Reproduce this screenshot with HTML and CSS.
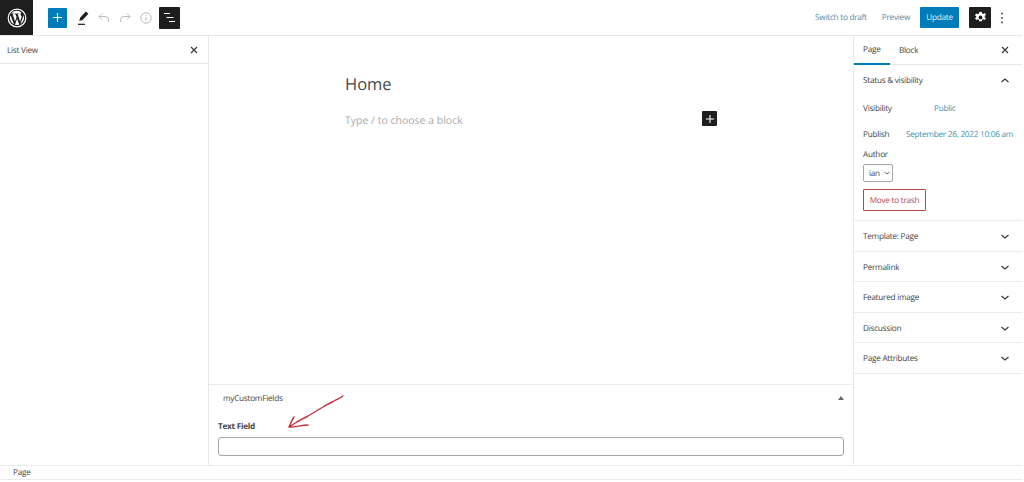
FILE: index.html
```html
<!DOCTYPE html>
<html lang="en">
<head>
    <meta charset="UTF-8">
    <title>Edit Page</title>
    <link rel="stylesheet" href="styles.css">
</head>
<body>
    <div class="editor">
        <!-- Top bar -->
        <header class="topbar">
            <div class="wp-logo">
                <svg width="20" height="20" viewBox="0 0 24 24"><circle cx="12" cy="12" r="10.6" fill="none" stroke="#fff" stroke-width="1.4"/><path fill="#fff" d="M3.6 12c0 3.3 1.9 6.2 4.7 7.6L4.3 8.6A8.4 8.4 0 0 0 3.6 12zm14.1-.4c0-1-.4-1.8-.7-2.3-.4-.7-.8-1.3-.8-2 0-.8.6-1.500 1.400-1.500h.1A8.4 8.4 0 0 0 5 6.800h.5c.9 0 2.200-.1 2.200-.1.4 0 .5.6 0 .7 0 0-.4 0-.9.1l2.900 8.700 1.800-5.300-1.300-3.400c-.4 0-.8-.1-.8-.1-.4 0-.4-.7.1-.7 0 0 1.300.1 2.100.1.900 0 2.200-.1 2.200-.1.4 0 .5.6 0 .7 0 0-.4 0-.9.1l2.900 8.600.8-2.700c.3-1.100.6-1.900.6-2.600zM12.100 12.800l-2.500 7.300a8.4 8.4 0 0 0 5.200-.1l-.1-.1-2.600-7.100zm7.200-4.700c0 .3.1.6.1.9 0 .9-.2 1.800-.7 3.100l-2.600 7.400a8.4 8.4 0 0 0 3.200-11.400z"/></svg>
            </div>
            <div class="tools">
                <button class="tool-add" type="button">
                    <svg width="9" height="9" viewBox="0 0 9 9"><path d="M4.500 0v9M0 4.500h9" stroke="#fff" stroke-width="1.100" fill="none"/></svg>
                </button>
                <svg class="tool-icon" width="16" height="16" viewBox="0 0 16 16"><path fill="#1e1e1e" d="M10.800 1.500l2.600 2.300-5.800 6.300-3.300 1 .8-3.300z"/><path stroke="#1e1e1e" stroke-width="1.200" d="M3 14.300h7"/></svg>
                <svg class="tool-icon" width="16" height="16" viewBox="0 0 16 16"><path fill="none" stroke="#bcbcbc" stroke-width="1" d="M6 3.500L3 6.500l3 3M3 6.500h6a3.500 3.500 0 0 1 3.500 3.500v2"/></svg>
                <svg class="tool-icon" width="16" height="16" viewBox="0 0 16 16"><path fill="none" stroke="#bcbcbc" stroke-width="1" d="M10 3.500l3 3-3 3M13 6.500H7A3.500 3.500 0 0 0 3.500 10v2"/></svg>
                <svg class="tool-icon" width="16" height="16" viewBox="0 0 16 16"><circle cx="8" cy="8" r="5.200" fill="none" stroke="#bcbcbc" stroke-width="1"/><path stroke="#bcbcbc" stroke-width="1.100" d="M8 7.200v3.300M8 5v1.100"/></svg>
                <button class="tool-list" type="button">
                    <svg width="13" height="11" viewBox="0 0 13 11"><path stroke="#fff" stroke-width="1.100" d="M1 1.500h6M3.500 5.500h7M6 9.500h6"/></svg>
                </button>
            </div>
            <div class="actions">
                <a class="link-btn">Switch to draft</a>
                <a class="link-btn preview">Preview</a>
                <button class="update-btn" type="button">Update</button>
                <button class="settings-btn" type="button">
                    <svg width="13" height="13" viewBox="0 0 24 24"><path fill="#fff" fill-rule="evenodd" d="M14.500 1.500l.6 3 2 .9 2.700-1.600 2.400 3.300-2.300 2.100v2.200l2.300 2.100-2.400 3.300-2.700-1.600-2 .9-.6 3h-5l-.6-3-2-.9-2.700 1.600-2.400-3.300 2.300-2.100V9.900L1.700 7.800l2.400-3.300 2.700 1.600 2-.9.6-3zM12 8.500a3.500 3.500 0 1 0 0 7 3.500 3.500 0 0 0 0-7z"/></svg>
                </button>
                <svg class="more" width="4" height="14" viewBox="0 0 4 14"><circle cx="2" cy="2.500" r=".9" fill="#444"/><circle cx="2" cy="7" r=".9" fill="#444"/><circle cx="2" cy="11.500" r=".9" fill="#444"/></svg>
            </div>
        </header>

        <div class="workspace">
            <!-- List view -->
            <aside class="listview">
                <div class="listview-head">
                    <span>List View</span>
                    <svg class="close" width="8" height="8" viewBox="0 0 8 8"><path d="M1 1l6 6M7 1L1 7" stroke="#333" stroke-width="1.100"/></svg>
                </div>
            </aside>

            <!-- Content -->
            <main class="content">
                <div class="canvas">
                    <div class="canvas-inner">
                        <h1 class="post-title">Home</h1>
                        <div class="block-row">
                            <span class="placeholder">Type / to choose a block</span>
                            <span class="block-add">
                                <svg width="8" height="8" viewBox="0 0 8 8"><path d="M4 0v8M0 4h8" stroke="#fff" stroke-width="1.100"/></svg>
                            </span>
                        </div>
                    </div>
                </div>
                <section class="metabox">
                    <div class="metabox-head">
                        <span>myCustomFields</span>
                        <span class="metabox-toggle"></span>
                    </div>
                    <label class="field-label">Text Field</label>
                    <input class="field-input" type="text">
                    <svg class="arrow" width="62" height="38" viewBox="0 0 62 38"><path fill="none" stroke="#c6303e" stroke-width="1.400" stroke-linecap="round" stroke-linejoin="round" d="M58 3c-3 2.500-6 3-10 5.500-4 2-7 3.500-10 5.500-5 3-10 6-15 9-4 2-8 4-12 6.500L4 34M4 34c1.500-3.500 3-7 5-10M4 34c6 .5 12-2 19-2"/></svg>
                </section>
            </main>

            <!-- Settings sidebar -->
            <aside class="sidebar">
                <div class="tabs">
                    <span class="tab active">Page</span>
                    <span class="tab">Block</span>
                    <svg class="close" width="8" height="8" viewBox="0 0 8 8"><path d="M1 1l6 6M7 1L1 7" stroke="#333" stroke-width="1.100"/></svg>
                </div>
                <section class="panel panel-open">
                    <div class="panel-title">
                        <span>Status &amp; visibility</span>
                        <svg class="chev" width="8" height="5" viewBox="0 0 8 5"><path d="M.5 4L4 1l3.500 3" fill="none" stroke="#333" stroke-width="1.100"/></svg>
                    </div>
                    <div class="row row-visibility">
                        <span class="row-label">Visibility</span>
                        <a class="row-value">Public</a>
                    </div>
                    <div class="row row-publish">
                        <span class="row-label">Publish</span>
                        <a class="row-value">September 26, 2022 10:06 am</a>
                    </div>
                    <div class="author-label">Author</div>
                    <div class="author-select">ian
                        <svg width="6" height="4" viewBox="0 0 6 4"><path d="M.5 1L3 3l2.500-2" fill="none" stroke="#555" stroke-width=".9"/></svg>
                    </div>
                    <button class="trash-btn" type="button">Move to trash</button>
                </section>
                <section class="panel">
                    <div class="panel-title"><span>Template: Page</span><svg class="chev" width="8" height="5" viewBox="0 0 8 5"><path d="M.5 1L4 4l3.500-3" fill="none" stroke="#333" stroke-width="1.100"/></svg></div>
                </section>
                <section class="panel">
                    <div class="panel-title"><span>Permalink</span><svg class="chev" width="8" height="5" viewBox="0 0 8 5"><path d="M.5 1L4 4l3.500-3" fill="none" stroke="#333" stroke-width="1.100"/></svg></div>
                </section>
                <section class="panel">
                    <div class="panel-title"><span>Featured image</span><svg class="chev" width="8" height="5" viewBox="0 0 8 5"><path d="M.5 1L4 4l3.500-3" fill="none" stroke="#333" stroke-width="1.100"/></svg></div>
                </section>
                <section class="panel">
                    <div class="panel-title"><span>Discussion</span><svg class="chev" width="8" height="5" viewBox="0 0 8 5"><path d="M.5 1L4 4l3.500-3" fill="none" stroke="#333" stroke-width="1.100"/></svg></div>
                </section>
                <section class="panel">
                    <div class="panel-title"><span>Page Attributes</span><svg class="chev" width="8" height="5" viewBox="0 0 8 5"><path d="M.5 1L4 4l3.500-3" fill="none" stroke="#333" stroke-width="1.100"/></svg></div>
                </section>
            </aside>
        </div>

        <footer class="statusbar">Page</footer>
    </div>
</body>
</html>
```

FILE: styles.css
```css
* {
    box-sizing: border-box;
}

body {
    margin: 0;
    background-color: #fff;
    color: #454545;
    font-family: "Open Sans", "Noto Sans", sans-serif;
    font-size: 8.2px;
    letter-spacing: -0.25px;
    line-height: 13px;
    text-rendering: geometricPrecision;
    overflow: hidden;
}

svg {
    display: block;
}

button {
    border: none;
    padding: 0;
    font-family: inherit;
    letter-spacing: inherit;
    text-rendering: inherit;
}

.editor {
    display: flex;
    flex-direction: column;
    width: 1022px;
    height: 480px;
}

/* Top bar */
.topbar {
    display: flex;
    align-items: center;
    height: 36px;
    flex-shrink: 0;
    border-bottom: 1px solid #e8e8e8;
}

.wp-logo {
    display: flex;
    align-items: center;
    justify-content: center;
    width: 33px;
    height: 35px;
    background-color: #1e1e1e;
}

.tools {
    display: flex;
    align-items: center;
    margin-left: 15px;
}

.tool-add {
    display: flex;
    align-items: center;
    justify-content: center;
    width: 19px;
    height: 20px;
    margin-right: 8px;
    border-radius: 1px;
    background-color: #007cba;
}

.tool-icon {
    margin-right: 5px;
}

.tool-list {
    display: flex;
    align-items: center;
    justify-content: center;
    width: 21px;
    height: 22px;
    border-radius: 1px;
    background-color: #1e1e1e;
}

.actions {
    display: flex;
    align-items: center;
    margin-left: auto;
    padding-right: 18px;
}

.link-btn {
    color: #4f8dab;
}

.preview {
    margin-left: 15px;
}

.update-btn {
    width: 39px;
    height: 21px;
    margin-left: 10px;
    border-radius: 1px;
    background-color: #007cba;
    color: #e6f2f8;
    font-size: 8.2px;
}

.settings-btn {
    display: flex;
    align-items: center;
    justify-content: center;
    width: 22px;
    height: 21px;
    margin-left: 10px;
    border-radius: 1px;
    background-color: #1e1e1e;
}

.more {
    margin-left: 9px;
}

/* Main area */
.workspace {
    display: flex;
    flex: 1;
    min-height: 0;
}

.listview {
    width: 209px;
    flex-shrink: 0;
    border-right: 1px solid #e8e8e8;
}

.listview-head {
    display: flex;
    align-items: center;
    justify-content: space-between;
    height: 28px;
    padding: 1px 10px 0 7px;
    border-bottom: 1px solid #e8e8e8;
}

.content {
    display: flex;
    flex-direction: column;
    flex: 1;
    min-width: 0;
}

.canvas {
    flex: 1;
    padding-top: 36px;
}

.canvas-inner {
    width: 372px;
    margin-left: 136px;
}

.post-title {
    margin: 0;
    color: #484848;
    font-size: 16.5px;
    font-weight: 400;
    letter-spacing: 0;
    line-height: 24px;
}

.block-row {
    display: flex;
    align-items: flex-start;
    justify-content: space-between;
    margin-top: 15px;
}

.placeholder {
    padding-top: 1px;
    color: #a8a8a8;
    font-size: 10.5px;
    letter-spacing: 0;
    line-height: 18px;
}

.block-add {
    display: flex;
    align-items: center;
    justify-content: center;
    width: 15px;
    height: 15px;
    border-radius: 1px;
    background-color: #1e1e1e;
}

.metabox {
    position: relative;
    height: 81px;
    padding: 0 9px;
    border-top: 1px solid #ececec;
}

.metabox-head {
    display: flex;
    align-items: center;
    justify-content: space-between;
    height: 25px;
    padding: 1px 0 0 5px;
}

.metabox-toggle {
    width: 0;
    height: 0;
    border-left: 3px solid transparent;
    border-right: 3px solid transparent;
    border-bottom: 4px solid #666;
}

.field-label {
    display: block;
    margin-top: 10px;
    color: #444;
    font-weight: 700;
    line-height: 13px;
}

.field-input {
    display: block;
    width: 626px;
    height: 19px;
    margin-top: 4px;
    border: 1px solid #a6a6a6;
    border-radius: 3px;
    background-color: #fff;
}

.arrow {
    position: absolute;
    left: 76px;
    top: 8px;
}

/* Settings sidebar */
.sidebar {
    width: 169px;
    flex-shrink: 0;
    border-left: 1px solid #e8e8e8;
}

.tabs {
    display: flex;
    align-items: center;
    height: 29px;
    padding-right: 13px;
    border-bottom: 1px solid #e8e8e8;
}

.tab {
    display: flex;
    align-items: center;
    height: 29px;
    padding: 1px 9px 0;
    color: #444;
}

.tab.active {
    width: 36px;
    border-bottom: 2px solid #007cba;
}

.tabs .close {
    margin-left: auto;
}

.panel {
    height: 30.5px;
    border-bottom: 1px solid #ececec;
}

.panel-open {
    height: 156px;
}

.panel-title {
    display: flex;
    align-items: center;
    justify-content: space-between;
    height: 30px;
    padding: 1px 13px 0 9px;
    color: #444;
}

.row {
    display: flex;
    align-items: center;
    padding-left: 9px;
}

.row-visibility {
    margin-top: 6px;
    height: 14px;
}

.row-publish {
    margin-top: 12px;
    height: 14px;
}

.row-label {
    width: 43px;
    flex-shrink: 0;
}

.row-value {
    color: #4090b0;
    white-space: nowrap;
}

.row-visibility .row-value {
    margin-left: 28px;
}

.author-label {
    margin: 7px 0 0 9px;
    line-height: 14px;
}

.author-select {
    display: flex;
    align-items: center;
    gap: 4px;
    width: 30px;
    height: 18px;
    margin: 2px 0 0 9px;
    padding-left: 5px;
    border: 1px solid #a6a6a6;
    border-radius: 2px;
}

.trash-btn {
    display: block;
    width: 63px;
    height: 22px;
    margin: 7px 0 0 9px;
    border: 1px solid #b5484a;
    border-radius: 1px;
    background-color: #fff;
    color: #b5484a;
    font-size: 8.2px;
}

/* Status bar */
.statusbar {
    display: flex;
    align-items: center;
    height: 15px;
    flex-shrink: 0;
    padding-left: 13px;
    border-top: 1px solid #ececec;
    border-bottom: 1px solid #ececec;
}
```
